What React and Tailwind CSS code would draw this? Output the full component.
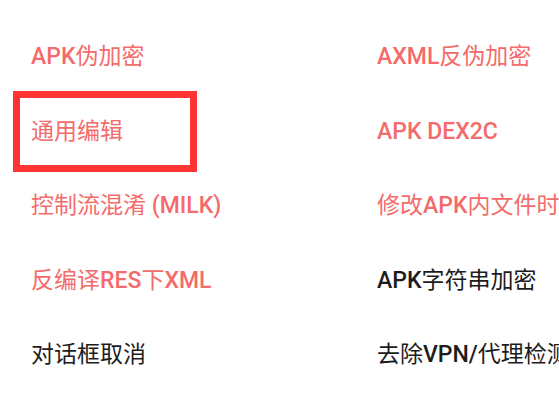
import React from 'react';

const items = [
  { left: 'APK伪加密', right: 'AXML反伪加密', leftRed: true, rightRed: true },
  { left: '通用编辑', right: 'APK DEX2C', leftRed: true, rightRed: true, boxed: true },
  { left: '控制流混淆 (MILK)', right: '修改APK内文件时间', leftRed: true, rightRed: true },
  { left: '反编译RES下XML', right: 'APK字符串加密', leftRed: true, rightRed: false },
  { left: '对话框取消', right: '去除VPN/代理检测', leftRed: false, rightRed: false },
];

// latin runs are medium weight, CJK stays regular
const Label = ({ text }) =>
  text.split(/([\x20-\x7e]+)/).filter(Boolean).map((part, i) =>
    /[\x20-\x7e]/.test(part) ? (
      <span key={i} className="font-medium">{part}</span>
    ) : (
      <span key={i} className="font-normal">{part}</span>
    )
  );

const Cell = ({ text, red, boxed }) => (
  <div className="relative flex items-center h-[74.5px] whitespace-nowrap pl-[31px]">
    {boxed && (
      <span className="absolute left-[13px] top-[-3.5px] w-[184px] h-[81px] border-[7px] border-[#ff3535]" />
    )}
    <span className={red ? 'text-[#f46b6b]' : 'text-[#1c1c1c]'}>
      <Label text={text} />
    </span>
  </div>
);

const App = () => {
  return (
    <div
      className="w-[559px] h-[409px] overflow-hidden bg-white pt-[20px] text-[23px]"
      style={{ fontFamily: 'Roboto, "Noto Sans CJK SC", sans-serif' }}
    >
      <div className="grid grid-cols-[346px_1fr]">
        {items.map((row) => (
          <React.Fragment key={row.left}>
            <Cell text={row.left} red={row.leftRed} boxed={row.boxed} />
            <Cell text={row.right} red={row.rightRed} />
          </React.Fragment>
        ))}
      </div>
    </div>
  );
};

export default App;
